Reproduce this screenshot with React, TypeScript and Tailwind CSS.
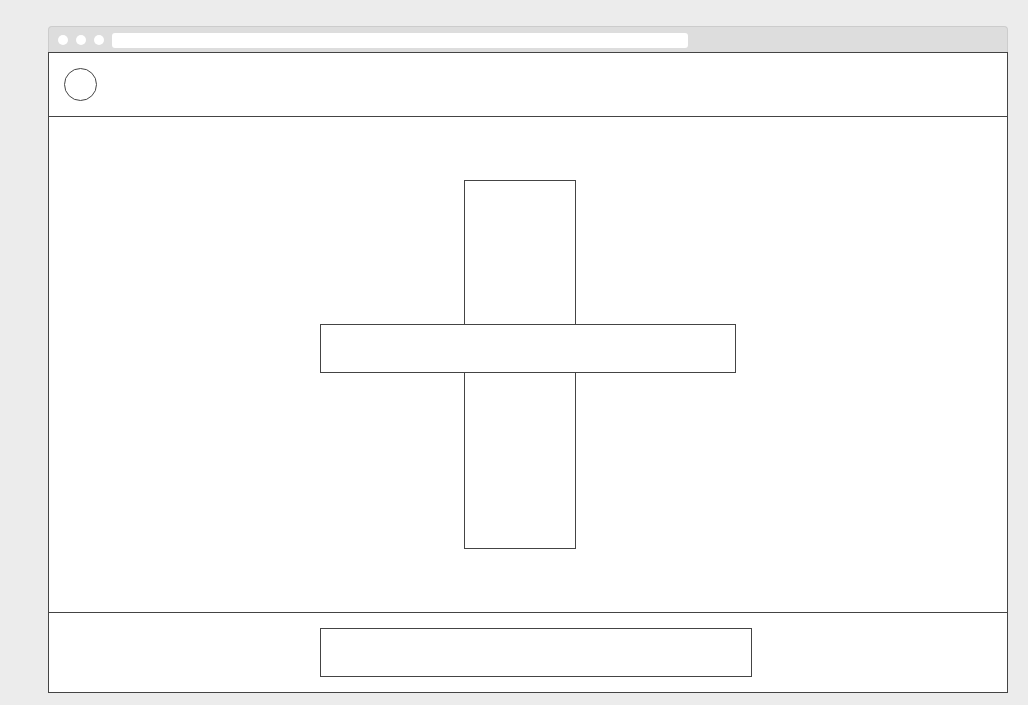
import React from 'react';

const App = () => {
    return (
        <div className="w-[1028px] h-[705px] bg-[#ececec] pt-[26px] pl-[48px] overflow-hidden">
            <div className="w-[960px] flex flex-col">
                {/* title bar */}
                <div className="h-[26px] bg-[#dddddd] border border-b-0 border-[#cccccc] rounded-t-[4px] flex items-start pt-[6px] pl-[9px]">
                    <div className="flex gap-[8px] mt-[2px]">
                        <div className="w-[10px] h-[10px] rounded-full bg-white" />
                        <div className="w-[10px] h-[10px] rounded-full bg-white" />
                        <div className="w-[10px] h-[10px] rounded-full bg-white" />
                    </div>
                    <div className="ml-[8px] w-[576px] h-[15px] bg-white rounded-[3px]" />
                </div>

                {/* page */}
                <div className="border border-[#444444] bg-white flex flex-col">
                    <div className="h-[64px] border-b border-[#444444] p-[15px]">
                        <div className="w-[33px] h-[33px] rounded-full border border-[#444444]" />
                    </div>

                    <div className="h-[496px] border-b border-[#444444] pl-[271px] pt-[63px]">
                        <div className="grid w-[416px] h-[369px]">
                            <div className="[grid-area:1/1] ml-[144px] w-[112px] h-[369px] border border-[#444444]" />
                            <div className="[grid-area:1/1] mt-[144px] w-[416px] h-[49px] border border-[#444444] bg-white" />
                        </div>
                    </div>

                    <div className="h-[79px] pl-[271px] pt-[15px]">
                        <div className="w-[432px] h-[49px] border border-[#444444]" />
                    </div>
                </div>
            </div>
        </div>
    );
};

export default App;
